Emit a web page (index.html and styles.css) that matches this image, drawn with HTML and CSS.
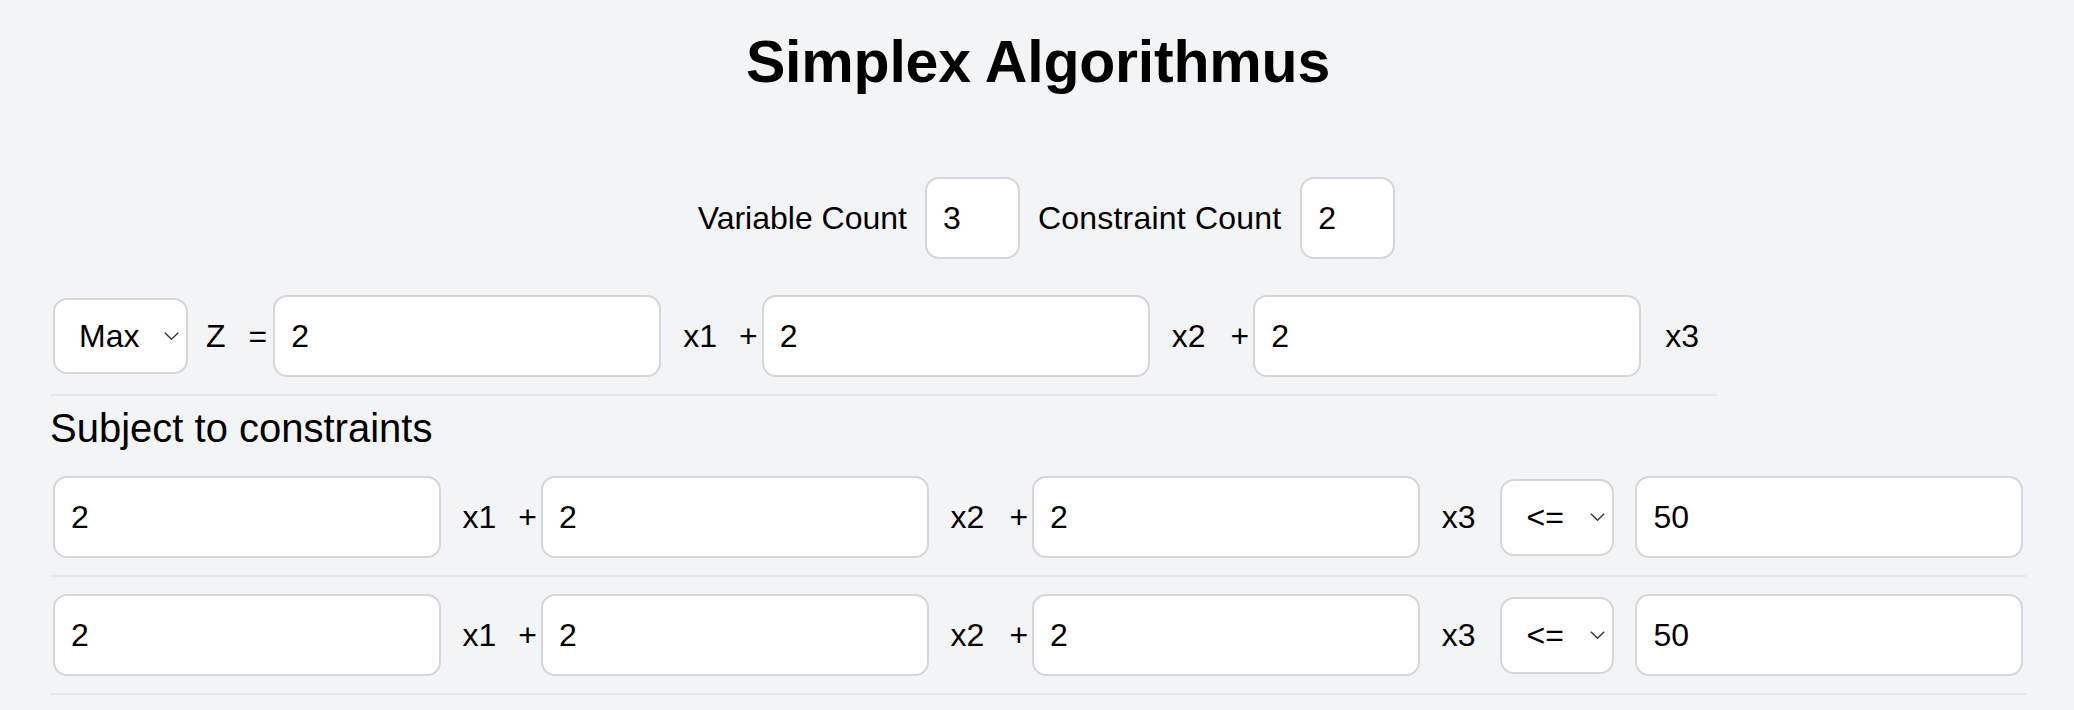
FILE: index.html
```html
<!DOCTYPE html>
<html lang="de">
<head>
<meta charset="utf-8">
<title>Simplex Algorithmus</title>
<link rel="stylesheet" href="styles.css">
</head>
<body>
<main class="page">
  <h1 class="title">Simplex Algorithmus</h1>

  <div class="counts">
    <label class="count-label">Variable Count</label>
    <input class="field count" type="text" value="3">
    <label class="count-label second">Constraint Count</label>
    <input class="field count" type="text" value="2">
  </div>

  <div class="objective">
    <div class="select-wrap obj-sel">
      <select class="select"><option>Max</option><option>Min</option></select>
      <svg class="chev" viewBox="0 0 15 8"><path d="M0.8 0.8 L7.5 7.2 L14.2 0.8" fill="none" stroke="#333" stroke-width="1.4"/></svg>
    </div>
    <span class="zed">Z</span><span class="eq">=</span>
    <input class="field coef" type="text" value="2">
    <span class="var">x1</span><span class="op">+</span>
    <input class="field coef" type="text" value="2">
    <span class="var wide">x2</span><span class="op">+</span>
    <input class="field coef" type="text" value="2">
    <span class="var last">x3</span>
  </div>

  <h3 class="subtitle">Subject to constraints</h3>

  <div class="constraint">
    <input class="field coef" type="text" value="2">
    <span class="var">x1</span><span class="op">+</span>
    <input class="field coef" type="text" value="2">
    <span class="var wide">x2</span><span class="op">+</span>
    <input class="field coef" type="text" value="2">
    <span class="var">x3</span>
    <div class="select-wrap rel-sel">
      <select class="select"><option>&lt;=</option><option>&gt;=</option><option>=</option></select>
      <svg class="chev" viewBox="0 0 15 8"><path d="M0.8 0.8 L7.5 7.2 L14.2 0.8" fill="none" stroke="#333" stroke-width="1.4"/></svg>
    </div>
    <input class="field coef" type="text" value="50">
  </div>

  <div class="constraint">
    <input class="field coef" type="text" value="2">
    <span class="var">x1</span><span class="op">+</span>
    <input class="field coef" type="text" value="2">
    <span class="var wide">x2</span><span class="op">+</span>
    <input class="field coef" type="text" value="2">
    <span class="var">x3</span>
    <div class="select-wrap rel-sel">
      <select class="select"><option>&lt;=</option><option>&gt;=</option><option>=</option></select>
      <svg class="chev" viewBox="0 0 15 8"><path d="M0.8 0.8 L7.5 7.2 L14.2 0.8" fill="none" stroke="#333" stroke-width="1.4"/></svg>
    </div>
    <input class="field coef" type="text" value="50">
  </div>
</main>
</body>
</html>
```

FILE: styles.css
```css
html, body {
  margin: 0;
  background: #f3f4f6;
}

body {
  font-family: "Liberation Sans", Arial, Helvetica, sans-serif;
  color: #000;
}

.page {
  padding: 0 48px 0 50px;
}

.title {
  margin: 28px 0 0;
  text-align: center;
  font-size: 59px;
  letter-spacing: -0.2px;
  font-weight: 700;
  line-height: normal;
}

.counts {
  display: flex;
  justify-content: center;
  align-items: center;
  margin-top: 78px;
  padding-left: 20px;
  font-size: 32px;
}

.count-label {
  margin-right: 15px;
}

.count-label.second {
  margin-left: 15px;
  margin-right: 16px;
  letter-spacing: 0.2px;
}

.field {
  font-family: inherit;
  font-size: 32px;
  height: 82px;
  box-sizing: border-box;
  border: 2px solid #d4d6db;
  border-radius: 14px;
  background: #fff;
  padding: 0 16px;
  margin: 3px;
  color: #000;
  outline: none;
}

.count {
  width: 95px;
}

.coef {
  width: 388px;
}

.objective {
  display: flex;
  width: fit-content;
  align-items: center;
  margin-top: 16px;
  padding: 14px 0;
  border-bottom: 2px solid #e5e7eb;
  font-size: 32px;
}

.constraint {
  display: flex;
  align-items: center;
  padding: 14px 0;
  border-bottom: 2px solid #e5e7eb;
  font-size: 32px;
}

.constraint .coef {
  flex: 1 1 0;
  width: auto;
  min-width: 0;
}

.subtitle {
  margin: 10px 0 8px;
  font-size: 40px;
  font-weight: 400;
  line-height: normal;
}

.zed {
  margin-left: 15px;
  margin-right: 23px;
}

.eq {
  margin-right: 3px;
}

.var {
  margin: 0 22px 0 19px;
}

.var.wide {
  margin-right: 25px;
}

.var.last {
  margin-left: 21px;
  margin-right: 18px;
}

.op {
  margin-right: 1px;
}

.select-wrap {
  position: relative;
  display: flex;
  margin: 3px;
}

.rel-sel {
  margin-right: 18px;
}

.select {
  appearance: none;
  -webkit-appearance: none;
  font-family: inherit;
  font-size: 32px;
  box-sizing: border-box;
  border: 2px solid #d4d6db;
  border-radius: 14px;
  background: #fff;
  color: #000;
  padding: 0 0 0 24px;
  margin: 0;
  outline: none;
}

.obj-sel .select {
  width: 135px;
  height: 76px;
}

.rel-sel .select {
  width: 114px;
  height: 77px;
}

.chev {
  position: absolute;
  right: 9px;
  top: 50%;
  width: 15px;
  height: 8px;
  margin-top: -4px;
  pointer-events: none;
}
```
